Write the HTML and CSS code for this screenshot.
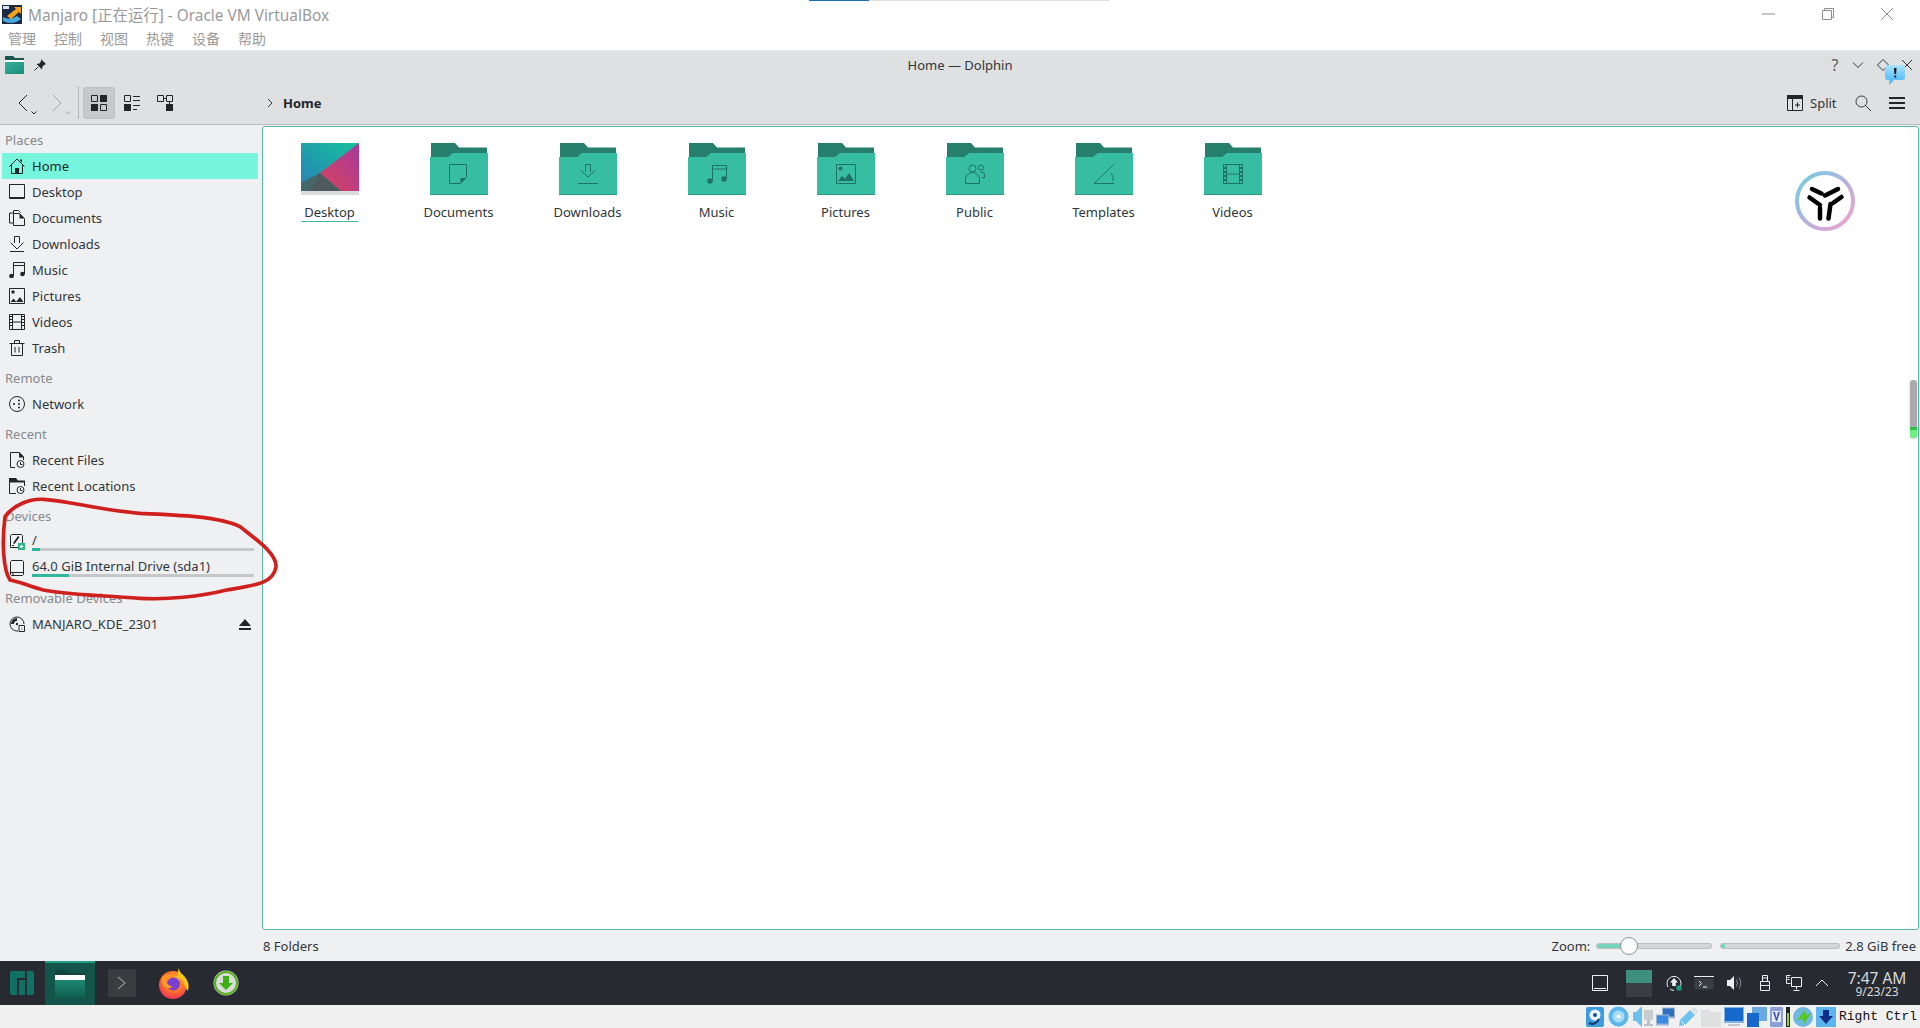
FILE: index.html
```html
<!DOCTYPE html>
<html lang="en">
<head>
<meta charset="utf-8">
<title>Manjaro - Oracle VM VirtualBox</title>
<link rel="stylesheet" href="styles.css">
</head>
<body>
<svg class="sprite" xmlns="http://www.w3.org/2000/svg">
  <defs>
    <linearGradient id="wallBg" x1="0" y1="1" x2="1" y2="0"><stop offset="0" stop-color="#2b7fb8"/><stop offset="1" stop-color="#12c39b"/></linearGradient>
    <linearGradient id="wallPink" x1="0" y1="1" x2="1" y2="0"><stop offset="0" stop-color="#d8425c"/><stop offset="1" stop-color="#a63a9c"/></linearGradient>
    <linearGradient id="ring" x1="0" y1="0" x2="1" y2="1"><stop offset="0" stop-color="#6fd0e0"/><stop offset=".5" stop-color="#b4b0e0"/><stop offset="1" stop-color="#f2a4c8"/></linearGradient>
    <linearGradient id="tb" x1="0" y1="0" x2="0" y2="1"><stop offset="0" stop-color="#1f8672"/><stop offset="1" stop-color="#0e5f52"/></linearGradient>
    <linearGradient id="tb2" x1="0" y1="0" x2="1" y2="1"><stop offset="0" stop-color="#35b39b"/><stop offset="1" stop-color="#1d8a76"/></linearGradient>
    <radialGradient id="ffx" cx=".55" cy=".35" r=".75"><stop offset="0" stop-color="#ffb52c"/><stop offset=".55" stop-color="#ff6a2a"/><stop offset="1" stop-color="#e5206f"/></radialGradient>
    <linearGradient id="bubble" x1="0" y1="0" x2="0" y2="1"><stop offset="0" stop-color="#a8e4ff"/><stop offset="1" stop-color="#3fb0f0"/></linearGradient>

    <symbol id="folder" viewBox="0 0 58 52">
      <path class="fb" d="M1 0H25L29 4.500H57V15H1z"/>
      <path class="ff" d="M0 14H18L23 10H58V52H0z"/>
      <path class="fl" d="M0 51H58V52H0z"/>
    </symbol>

    <symbol id="home" viewBox="0 0 16 16"><path class="s" d="M.5 8.500 8 1l7.500 7.500M2.500 7v8.500h11V7"/><path class="f" d="M6 10h4v5.500H6zM11 1.500h2v3l-2-2z"/></symbol>
    <symbol id="desk" viewBox="0 0 16 16"><path class="s" d="M.5.5h15v14H.5z"/><path class="f" d="M1 13h14v2H1z"/></symbol>
    <symbol id="docs" viewBox="0 0 16 16"><path class="s" d="M4.500 3.500V.5h5l2 2M4.500 3H.5v10h4"/><path class="s" d="M4.500 3.500h6l5 5v7h-11z"/><path class="f" d="M10.500 3.500l5 5h-5z"/></symbol>
    <symbol id="down" viewBox="0 0 16 16"><path class="s" d="M5.500 7V.5h5V7M1.500 6.500 8 13l6.500-6.500M1 15.500h14"/></symbol>
    <symbol id="music" viewBox="0 0 16 16"><path class="s" d="M4.500 14V.5h11V12"/><path class="s" d="M4.500 3.500h11"/><circle class="f" cx="2.500" cy="14" r="2.300"/><circle class="f" cx="13.500" cy="12" r="2.300"/></symbol>
    <symbol id="pics" viewBox="0 0 16 16"><path class="s" d="M.5.5h15v15H.5z"/><circle class="f" cx="4" cy="4" r="1.700"/><path class="f" d="M1.500 14l3-3.500 3 3.500zM7 14l4-5 3.500 5z"/></symbol>
    <symbol id="vids" viewBox="0 0 16 16"><path class="s" d="M.5.5h15v15H.5zM3.500.5v15M12.500.5v15M3.500 8h9"/><path class="f" d="M0 2h3v1H0zM0 5h3v1H0zM0 8h3v1H0zM0 11h3v1H0zM13 2h3v1h-3zM13 5h3v1h-3zM13 8h3v1h-3zM13 11h3v1h-3z"/></symbol>
    <symbol id="trash" viewBox="0 0 16 16"><path class="s" d="M2.500 3.500h11v12h-11zM.5 3.500h15M5.500 3V.5h5V3M6 7v5.500M10 7v5.500"/></symbol>
    <symbol id="net" viewBox="0 0 16 16"><circle class="s" cx="8" cy="8" r="7.500"/><circle class="f" cx="5" cy="8" r="1"/><circle class="f" cx="10" cy="4.500" r="1"/><circle class="f" cx="10" cy="8" r="1"/><circle class="f" cx="10" cy="11.500" r="1"/></symbol>
    <symbol id="rfile" viewBox="0 0 16 16"><path class="s" d="M6 15.500H1.500V.5h9l4 4V8"/><path class="f" d="M10 .5l5 5h-5z"/><circle class="w s" cx="11.500" cy="12" r="3.500"/><path class="s" d="M11.500 10v2.500h2"/></symbol>
    <symbol id="rloc" viewBox="0 0 16 16"><path class="f" d="M0 0h7l2 2.500h7v2H0z"/><path class="s" d="M.5 4v11.500H7M15.500 4v4"/><circle class="w s" cx="11.500" cy="12" r="3.500"/><path class="s" d="M11.500 10v2.500h2"/></symbol>
    <symbol id="root" viewBox="0 0 16 16"><path class="s" d="M2.500.5h10l1 1v12h-12v-12z"/><path class="f" d="M4 9l5-7 1.500 1-5 7zM3 11h2v1H3z"/><path class="gr" d="M9 9h7v7H9z"/><path class="ws" d="M14.500 12.500h-3M13 11l-1.500 1.500L13 14"/></symbol>
    <symbol id="drive" viewBox="0 0 16 16"><path class="s" d="M2.500.5h11l1 1v13l-1 1h-11l-1-1v-13z"/><path class="f" d="M1.500 12h13v1h-13zM3 13.500h2v1H3z"/></symbol>
    <symbol id="disc" viewBox="0 0 16 16"><path class="s" d="M15 8a7 7 0 1 0-7 7h1"/><path class="f" d="M8 2a6 6 0 0 0-6 6h3a3 3 0 0 1 3-3z"/><circle class="f" cx="8" cy="8" r="1.200"/><path class="w s" d="M10 9.500h5.500v6H10z"/><path class="s" d="M13 12.500v1"/></symbol>
  </defs>
</svg>

<header class="vbox-head">
  <div class="vbox-title">
    <svg class="vbox-logo" viewBox="0 0 22 22">
      <rect x="1" y="2" width="20" height="19" fill="#1c2a44"/>
      <path d="M2 14q7 4 14-1l4 3q-8 7-18 2z" fill="#4aa8e0"/>
      <path d="M6 13 15 6l-2-2h7v7l-2-2-8 7z" fill="#f5a31c"/>
      <rect x="2" y="3" width="6" height="3" fill="#dfe6ee"/>
    </svg>
    <span>Manjaro [正在运行] - Oracle VM VirtualBox</span>
  </div>
  <nav class="vbox-menu"><span>管理</span><span>控制</span><span>视图</span><span>热键</span><span>设备</span><span>帮助</span></nav>
  <div class="load-bar"><i></i></div>
  <div class="win-btns">
    <svg class="wb" viewBox="0 0 14 14"><path d="M0 7h13"/></svg>
    <svg class="wb" viewBox="0 0 14 14"><path d="M1.500 3.500h9v9h-9zM3.500 3.500v-2h9v9h-2"/></svg>
    <svg class="wb" viewBox="0 0 14 14"><path d="M1 1l12 12M13 1 1 13"/></svg>
  </div>
</header>

<div class="dolphin">
  <div class="titlebar">
    <div class="tb-left">
      <svg class="tb-folder" viewBox="0 0 19 18"><path d="M0 0h8l2 2h9v5H0z" fill="#17574c"/><rect y="4" width="19" height="2" fill="#fff"/><rect y="6" width="19" height="12" fill="url(#tb2)"/></svg>
      <svg class="tb-pin" viewBox="0 0 12 12"><path class="pin" d="M7 0l5 5-1.500.8L8.500 7.500l-.5 3-5.500-5.500 3-.5L7.200 2z"/><path class="pinl" d="M4 8 .5 11.500"/></svg>
    </div>
    <div class="tb-title">Home — Dolphin</div>
    <div class="tb-right">
      <span class="tb-q">?</span>
      <svg class="tb-btn" viewBox="0 0 12 12"><path d="M1 3.500 6 8.500l5-5"/></svg>
      <svg class="tb-btn" viewBox="0 0 12 12"><path d="M6 .5 11.500 6 6 11.500.5 6z"/></svg>
      <svg class="tb-btn" viewBox="0 0 12 12"><path d="M1 1l10 10M11 1 1 11"/></svg>
      <svg class="bubble" viewBox="0 0 20 20"><path d="M3 0h14a3 3 0 0 1 3 3v9a3 3 0 0 1-3 3H9l-5 5 .5-5H3a3 3 0 0 1-3-3V3a3 3 0 0 1 3-3z" fill="url(#bubble)"/><path d="M9 3h2.500l-.4 6H9.400zM9.300 10.500h1.900v2H9.300z" fill="#111"/></svg>
    </div>
  </div>

  <div class="toolbar">
    <div class="tool-left">
      <span class="nav"><svg class="nav-arrow" viewBox="0 0 10 18"><path d="M9 1 1 9l8 8"/></svg><svg class="nav-caret" viewBox="0 0 6 4"><path d="M.5.5 3 3 5.500.5"/></svg></span>
      <span class="nav nav-off"><svg class="nav-arrow" viewBox="0 0 10 18"><path d="M1 1l8 8-8 8"/></svg><svg class="nav-caret" viewBox="0 0 6 4"><path d="M.5.5 3 3 5.500.5"/></svg></span>
      <span class="tool-sep"></span>
      <span class="view view-on"><svg class="view-ic" viewBox="0 0 16 16"><path class="s" d="M.5.5h6v6h-6zM9.500 9.500h6v6h-6z"/><path class="f" d="M9 0h7v7H9zM0 9h7v7H0z"/></svg></span>
      <span class="view"><svg class="view-ic" viewBox="0 0 16 16"><path class="s" d="M.5.500h6v6h-6zM9 1.500h7M9 5.500h7M9 10.500h7M9 14.500h4"/><path class="f" d="M0 9h7v7H0z"/></svg></span>
      <span class="view"><svg class="view-ic" viewBox="0 0 16 16"><path class="s" d="M.5.5h6v6h-6zM9.500.5h6v6h-6zM6.500 3.500h3M12.500 6.500v3"/><path class="f" d="M9 9h7v7H9z"/></svg></span>
    </div>
    <div class="crumb">
      <svg class="crumb-ic" viewBox="0 0 6 10"><path d="M1 1l4 4-4 4"/></svg>
      <b>Home</b>
    </div>
    <div class="tool-right">
      <svg class="split-ic" viewBox="0 0 16 16"><path class="f" d="M0 0h16v4H0z"/><path class="s" d="M.5 4v11.500h15V4M5.500 4v11.500M8 10h5M10.500 7.500v5"/></svg>
      <span class="split-txt">Split</span>
      <svg class="search-ic" viewBox="0 0 16 16"><circle class="s" cx="6.500" cy="6.500" r="5.500"/><path class="s" d="M10.500 10.500 16 16"/></svg>
      <svg class="menu-ic" viewBox="0 0 16 14"><path class="f" d="M0 1h16v2H0zM0 6h16v2H0zM0 11h16v2H0z"/></svg>
    </div>
  </div>

  <main class="main">
    <aside class="sidebar">
      <div class="sec sec-first">Places</div>
      <div class="row row-on"><svg class="ic"><use href="#home"/></svg>Home</div>
      <div class="row"><svg class="ic"><use href="#desk"/></svg>Desktop</div>
      <div class="row"><svg class="ic"><use href="#docs"/></svg>Documents</div>
      <div class="row"><svg class="ic"><use href="#down"/></svg>Downloads</div>
      <div class="row"><svg class="ic"><use href="#music"/></svg>Music</div>
      <div class="row"><svg class="ic"><use href="#pics"/></svg>Pictures</div>
      <div class="row"><svg class="ic"><use href="#vids"/></svg>Videos</div>
      <div class="row"><svg class="ic"><use href="#trash"/></svg>Trash</div>
      <div class="sec">Remote</div>
      <div class="row"><svg class="ic"><use href="#net"/></svg>Network</div>
      <div class="sec">Recent</div>
      <div class="row"><svg class="ic"><use href="#rfile"/></svg>Recent Files</div>
      <div class="row"><svg class="ic"><use href="#rloc"/></svg>Recent Locations</div>
      <div class="sec">Devices</div>
      <div class="row row-dev"><svg class="ic"><use href="#root"/></svg><div class="dev"><span>/</span><div class="cap"><i class="cap-root"></i></div></div></div>
      <div class="row row-dev"><svg class="ic"><use href="#drive"/></svg><div class="dev"><span>64.0 GiB Internal Drive (sda1)</span><div class="cap"><i class="cap-sda"></i></div></div></div>
      <div class="sec">Removable Devices</div>
      <div class="row row-eject"><svg class="ic"><use href="#disc"/></svg>MANJARO_KDE_2301<svg class="eject" viewBox="0 0 12 11"><path d="M6 0l6 7H0zM0 9h12v2H0z"/></svg></div>
    </aside>

    <section class="content">
      <div class="pane">
        <div class="grid">
          <div class="cell">
            <svg class="thumb" viewBox="0 0 58 52"><rect width="58" height="48" fill="url(#wallBg)"/><path d="M58 0V48H40L19 30z" fill="url(#wallPink)"/><path d="M0 48V40L19 30 40 48z" fill="#4d5b5d"/><path d="M0 48V41L7 36 19 30 9 48z" fill="#3f6f76" opacity=".6"/><rect y="48" width="58" height="4" fill="#d9dcdc"/></svg>
            <span class="lbl lbl-on">Desktop</span>
          </div>
          <div class="cell"><div class="fold"><svg class="fold-bg"><use href="#folder"/></svg><svg class="gl" viewBox="0 0 20 20"><path d="M.5.5h17v13l-6 6H.5z"/><path class="gl-f" d="M17 14l-5.500 5.500V14z"/></svg></div><span class="lbl">Documents</span></div>
          <div class="cell"><div class="fold"><svg class="fold-bg"><use href="#folder"/></svg><svg class="gl" viewBox="0 0 20 20"><path d="M7.500 8V.5h5V8M3 6.500 10 13l7-6.500M0 19.500h20"/></svg></div><span class="lbl">Downloads</span></div>
          <div class="cell"><div class="fold"><svg class="fold-bg"><use href="#folder"/></svg><svg class="gl" viewBox="0 0 20 20"><path d="M5.500 17V1.500h14V15M5.500 5h14"/><circle class="gl-f" cx="3" cy="17" r="2.700"/><circle class="gl-f" cx="17" cy="15" r="2.700"/></svg></div><span class="lbl">Music</span></div>
          <div class="cell"><div class="fold"><svg class="fold-bg"><use href="#folder"/></svg><svg class="gl" viewBox="0 0 20 20"><path d="M.5.5h19v19H.5z"/><circle class="gl-f" cx="4.500" cy="4.500" r="2"/><path class="gl-f" d="M2 17l4-5 3 3 4-6 5 8z"/></svg></div><span class="lbl">Pictures</span></div>
          <div class="cell"><div class="fold"><svg class="fold-bg"><use href="#folder"/></svg><svg class="gl" viewBox="0 0 20 20"><circle cx="7.500" cy="4.500" r="3.500"/><circle cx="16" cy="3.500" r="2.500"/><path d="M.5 19.500v-4a7 7 0 0 1 14 0v4zM15 8h1.500a3 3 0 0 1 3 3v2.500H17"/></svg></div><span class="lbl">Public</span></div>
          <div class="cell"><div class="fold"><svg class="fold-bg"><use href="#folder"/></svg><svg class="gl" viewBox="0 0 20 20"><path d="M0 19.500 19.500.5M0 19.500h20M17 9q3 4 2 8"/></svg></div><span class="lbl">Templates</span></div>
          <div class="cell"><div class="fold"><svg class="fold-bg"><use href="#folder"/></svg><svg class="gl" viewBox="0 0 20 20"><path d="M.5.5h19v19H.5zM3.500.5v19M16.500.5v19M3.500 10h13"/><path class="gl-f" d="M0 3h3v2H0zM0 7h3v2H0zM0 11h3v2H0zM0 15h3v2H0zM17 3h3v2h-3zM17 7h3v2h-3zM17 11h3v2h-3zM17 15h3v2h-3z"/></svg></div><span class="lbl">Videos</span></div>
        </div>
      </div>
      <footer class="status">
        <span class="st-left">8 Folders</span>
        <span class="st-zoom">Zoom:</span>
        <div class="zoom-track"><i></i><b></b></div>
        <div class="free-track"><i></i></div>
        <span class="st-free">2.8 GiB free</span>
      </footer>
    </section>
  </main>
</div>

<div class="panel">
  <svg class="p-man" viewBox="0 0 24 24"><path d="M0 2a2 2 0 0 1 2-2h13v7H7v17H2a2 2 0 0 1-2-2zM9 9h6v15H9zM17 0h5a2 2 0 0 1 2 2v20a2 2 0 0 1-2 2h-5z" fill="#0e7163"/></svg>
  <div class="p-active">
    <svg class="p-folder" viewBox="0 0 30 28"><path d="M0 0h11l3 3h16v7H0z" fill="#11453d"/><rect y="5" width="30" height="5" fill="#fff"/><rect y="10" width="30" height="18" fill="url(#tb)"/></svg>
  </div>
  <div class="p-term"><svg class="p-term-c" viewBox="0 0 10 14"><path d="M1 1l7 6-7 6"/></svg></div>
  <svg class="p-fox" viewBox="0 0 32 32">
    <circle cx="15" cy="18" r="14" fill="url(#ffx)"/>
    <path d="M20 1q2 5 7 9 5 6 3 14-3-3-5-10-3-3-7-4 3-4 2-9z" fill="#ffc21f"/>
    <circle cx="15.500" cy="17" r="6.500" fill="#7a3fd0"/>
    <path d="M4 10q5-3 10-2-3 3-7 3 1 7 8 9-8 3-11-3z" fill="#ff9a26"/>
  </svg>
  <svg class="p-dl" viewBox="0 0 26 26"><circle cx="13" cy="13" r="12.500" fill="#d8dbd8"/><circle cx="13" cy="13" r="11" fill="none" stroke="#58b020" stroke-width="2"/><path d="M10 6h6v7h4l-7 7-7-7h4z" fill="#3dae14"/></svg>
  <div class="tray">
    <svg class="t-desk" viewBox="0 0 16 16"><path class="t-s" d="M.5.5h15v15H.5zM2 13.500h12"/></svg>
    <div class="t-pager"><i></i><b></b></div>
    <svg class="t-upd" viewBox="0 0 16 16"><path class="t-s" d="M2 12a7 7 0 1 1 12 0M4 14a7 7 0 0 0 4 1.500"/><path class="t-f" d="M8 3l4 4.500H9.800V11H6.200V7.500H4z"/><circle cx="13" cy="13" r="2.800" fill="#1a9a7c"/></svg>
    <svg class="t-con" viewBox="0 0 20 14"><path class="t-s" d="M0 .5h20"/><rect x=".5" y="2.500" width="19" height="11" fill="#3a3e45"/><path class="t-s" d="M5 5l2.500 2.500L5 10M9 11h4"/></svg>
    <svg class="t-vol" viewBox="0 0 16 16"><path class="t-f" d="M1 5h3l4-4v14l-4-4H1z"/><path class="t-s t-dim" d="M10.500 4.500q2 3.500 0 7M13 2.500q3.500 5.500 0 11"/></svg>
    <svg class="t-usb" viewBox="0 0 10 16"><path class="t-s" d="M2.500.5h5v6h-5zM.5 6.500h9v9h-9zM.5 10.500h9"/><path class="t-f" d="M3.500 2h1v2h-1zM5.500 2h1v2h-1z"/></svg>
    <svg class="t-net" viewBox="0 0 16 16"><path class="t-s" d="M4.500 .5h-4v8h4M5.500 2.500h10v9h-10zM10.500 11.500v3M7.500 15.500h6M1.500 2.500h2M1.500 4.500h2"/></svg>
    <svg class="t-car" viewBox="0 0 14 8"><path class="t-s" d="M1 7l6-6 6 6"/></svg>
    <div class="clock"><span class="c-t">7:47 AM</span><span class="c-d">9/23/23</span></div>
  </div>
</div>

<div class="vbox-status">
  <svg class="vs vs-18" viewBox="0 0 18 20"><rect width="18" height="20" rx="2" fill="#3d9be0"/><circle cx="9" cy="8" r="5.500" fill="#eaf5fd"/><circle cx="9" cy="8" r="2" fill="#1d4f88"/><path d="M3 16q6 3 10-4" fill="none" stroke="#123b6b" stroke-width="2"/></svg>
  <svg class="vs vs-21" viewBox="0 0 21 21"><circle cx="10.500" cy="10.500" r="10" fill="#5bb8ee"/><circle cx="10.500" cy="10.500" r="6" fill="#a9dcf7"/><circle cx="10.500" cy="10.500" r="2" fill="#fff"/></svg>
  <svg class="vs vs-22" viewBox="0 0 22 21"><path d="M0 6h3l6-6v21l-6-6H0z" fill="#6cc0ee"/><path d="M11 4h9v10h-9z" fill="#c9cccf"/><path d="M14 14h3v4h3v2h-9v-2h3z" fill="#bfc2c5"/></svg>
  <svg class="vs vs-19" viewBox="0 0 19 19"><rect x="6" y="0" width="13" height="11" fill="#9fb7d4"/><rect x="7" y="1" width="11" height="8" fill="#2f6fc0"/><rect y="7" width="13" height="11" fill="#9fb7d4"/><rect x="1" y="8" width="11" height="8" fill="#3a8ae0"/></svg>
  <svg class="vs vs-20" viewBox="0 0 20 20"><path d="M1 19l1-6L12 3l5 5L7 18z" fill="#6fc2f0"/><path d="M13 2l3-2 4 4-2 3z" fill="#d9dee3"/><path d="M3 14l4 4" stroke="#fff"/></svg>
  <svg class="vs vs-20" viewBox="0 0 20 20"><path d="M0 3h8l2 2h10v15H0z" fill="#dfe0e0"/></svg>
  <svg class="vs vs-20" viewBox="0 0 20 20"><rect width="20" height="16" fill="#7fb3e3"/><rect x="1" y="1" width="18" height="13" fill="#1668cc"/><rect x="4" y="17" width="12" height="2" fill="#c2c6ca"/></svg>
  <svg class="vs vs-20" viewBox="0 0 20 20"><rect x="5" width="15" height="14" fill="#6aa8e0"/><rect y="6" width="12" height="14" fill="#1668cc"/></svg>
  <svg class="vs vs-13" viewBox="0 0 13 20"><path d="M1 0h11l1 1v18l-1 1H1l-1-1V1z" fill="#8b9fd8"/><rect x="2" y="4" width="9" height="11" fill="#e7ebf8"/><path d="M3 5h2l1.500 6L8 5h2l-3 9H6z" fill="#3b55b5"/></svg>
  <span class="vs-meter"></span>
  <svg class="vs vs-20" viewBox="0 0 20 20"><circle cx="10" cy="10" r="10" fill="#6fb8e2"/><path d="M4 13 12 3l1 5 5-2-7 11-1-5z" fill="#56c81e"/></svg>
  <svg class="vs vs-20" viewBox="0 0 20 20"><rect width="20" height="20" fill="#5cb4ec"/><path d="M7 3h6v6h4l-7 8-7-8h4z" fill="#0f2f86"/></svg>
  <span class="vs-key">Right Ctrl</span>
</div>

<svg class="red-mark" viewBox="0 0 900 720"><path d="M30 510C10 480 5 400 15 320 40 285 90 265 130 268 220 275 300 300 420 310 540 315 660 320 720 350 770 390 830 430 828 470 820 520 770 525 680 540 600 560 500 570 420 565 300 555 200 555 130 540 90 530 60 515 30 510Z"/></svg>

<svg class="brand" viewBox="0 0 60 60">
  <circle class="brand-ring" cx="30" cy="30" r="28"/>
  <g class="brand-y"><path d="M17 18l9.500 4.500M30 24.500l13-6.500M14.500 26.500 25 34M38 32l8.500-6M25 37v10.500M35.500 33 33.500 47.500"/></g>
</svg>
<div class="scroll-ind"><i></i></div>
</body>
</html>
```

FILE: styles.css
```css
* { box-sizing: border-box; }
html, body { margin: 0; padding: 0; }
body {
  width: 1920px;
  height: 1028px;
  overflow: hidden;
  position: relative;
  display: flex;
  flex-direction: column;
  background: #fff;
  color: #31363b;
  font-family: "Noto Sans", "Noto Sans CJK SC", sans-serif;
  font-size: 13px;
}
.sprite { position: absolute; width: 0; height: 0; }

/* symbol parts */
.s { fill: none; stroke: currentColor; stroke-width: 1; }
.f { fill: currentColor; stroke: none; }
.w { fill: #eff0f1; }
.gr { fill: #2fb585; }
.ws { fill: none; stroke: #fff; stroke-width: 1.2; }
.fb { fill: #267f6d; }
.ff { fill: #37bda2; }
.fl { fill: #2a9a84; }

/* VirtualBox head */
.vbox-head { height: 50px; flex: none; position: relative; background: #fff; }
.vbox-title { height: 26px; display: flex; align-items: center; color: #9a9a9a; font-size: 15.4px; padding-top: 2px; }
.vbox-logo { width: 22px; height: 22px; flex: none; margin: 0 5px 0 1px; }
.vbox-menu { height: 24px; display: flex; gap: 18px; align-items: center; padding-left: 8px; color: #9a9a9a; font-size: 14px; }
.load-bar { position: absolute; left: 809px; top: 0; width: 301px; height: 1px; background: #dfe0e2; }
.load-bar i { display: block; width: 60px; height: 1px; background: #1a6fb5; }
.win-btns { position: absolute; right: 26px; top: 7px; display: flex; gap: 45px; }
.wb { width: 14px; height: 14px; fill: none; stroke: #8e8e8e; stroke-width: 1; }

/* Dolphin */
.dolphin { height: 911px; flex: none; display: flex; flex-direction: column; background: #eff0f1; }
.titlebar { height: 32px; flex: none; background: #dee0e2; display: flex; align-items: center; position: relative; border-top: 1px solid #e6e7e9; padding-bottom: 4px; }
.tb-left { display: flex; align-items: center; width: 660px; padding-left: 5px; gap: 10px; }
.tb-folder { width: 19px; height: 18px; }
.tb-pin { width: 12px; height: 12px; }
.pin { fill: #232629; }
.pinl { fill: none; stroke: #232629; }
.tb-title { width: 600px; text-align: center; font-size: 13px; color: #31363b; }
.tb-right { flex: 1; display: flex; align-items: center; justify-content: flex-end; gap: 12.500px; padding-right: 7px; position: relative; }
.tb-q { font-size: 16px; color: #5a5e62; line-height: 20px; margin-right: 1px; }
.tb-btn { width: 12px; height: 12px; fill: none; stroke: #31363b; stroke-width: 1; }
.bubble { position: absolute; right: 15px; top: 10px; width: 20px; height: 20px; }

.toolbar { height: 43px; flex: none; background: #dee0e2; border-bottom: 1px solid #b7b9bc; padding-bottom: 1px; display: flex; align-items: center; }
.tool-left { width: 262px; flex: none; display: flex; align-items: center; padding-left: 18px; height: 100%; color: #232629; }
.nav { display: flex; align-items: flex-end; width: 34px; height: 24px; }
.nav-arrow { width: 10px; height: 18px; fill: none; stroke: #232629; stroke-width: 1; margin-bottom: 3px; }
.nav-caret { width: 6px; height: 4px; fill: none; stroke: #232629; margin-left: 3px; margin-bottom: 0; }
.nav-off { opacity: .3; width: 26px; }
.tool-sep { width: 1px; height: 33px; background: #b5b7ba; margin-left: 0; margin-right: 4px; }
.view { width: 32px; height: 32px; margin-right: 1px; display: flex; align-items: center; justify-content: center; border-radius: 3px; }
.view-on { background: #c6c9cc; border: 1px solid #bfc2c5; }
.view-ic { width: 16px; height: 16px; }
.crumb { display: flex; align-items: center; gap: 10px; padding-left: 5px; color: #232629; }
.crumb b { font-weight: 700; font-size: 13px; }
.crumb-ic { width: 6px; height: 10px; fill: none; stroke: #31363b; }
.tool-right { margin-left: auto; display: flex; align-items: center; padding-right: 15px; color: #232629; }
.split-ic { width: 16px; height: 16px; margin-right: 7px; }
.split-txt { width: 26px; margin-right: 19px; font-size: 13px; color: #31363b; }
.search-ic { width: 16px; height: 16px; margin-right: 18px; color: #31363b; }
.menu-ic { width: 16px; height: 14px; }

.main { flex: 1; display: flex; min-height: 0; }
.sidebar { width: 262px; flex: none; padding: 2px 0 0 2px; background: #eff0f1; color: #31363b; }
.sec { height: 30px; padding: 8px 0 0 3px; line-height: 18px; color: #85898d; font-size: 13px; }
.sec-first { height: 26px; padding-top: 4px; }
.row { height: 26px; width: 256px; display: flex; align-items: center; padding-left: 7px; gap: 7px; font-size: 13px; color: #31363b; }
.row-on { background: #77f5dd; color: #1f2a2c; }
.ic { width: 16px; height: 16px; flex: none; color: #232629; }
.row-dev { align-items: flex-start; padding-top: 4px; }
.row-dev .ic { margin-top: 1px; }
.dev { flex: 1; padding-right: 4px; position: relative; }
.dev span { display: block; line-height: 14px; height: 14px; }
.cap { height: 3px; background: #c6c7c8; margin-top: 1px; }
.cap i { display: block; height: 3px; background: #2fb79b; }
.cap-root { width: 8px; }
.cap-sda { width: 37px; }
.eject { width: 12px; height: 11px; margin-left: auto; margin-right: 7px; fill: #232629; }

.content { flex: 1; display: flex; flex-direction: column; min-width: 0; }
.pane { height: 804px; margin-top: 1px; margin-right: 1px; background: #fff; border: 1px solid #58b8a6; border-radius: 3px; }
.grid { display: flex; padding: 16px 0 0 2px; }
.cell { width: 129px; display: flex; flex-direction: column; align-items: center; }
.thumb { width: 58px; height: 52px; display: block; }
.fold { width: 58px; height: 52px; position: relative; }
.fold-bg { width: 58px; height: 52px; display: block; }
.gl { position: absolute; left: 19px; top: 21px; width: 20px; height: 20px; fill: none; stroke: #1e7263; stroke-width: 1; }
.gl-f { fill: #1e7263; stroke: none; }
.lbl { margin-top: 8px; line-height: 18px; height: 19px; font-size: 13px; color: #31363b; }
.lbl-on { border-bottom: 1px solid #3fb9a2; padding: 0 3px; }

.status { flex: 1; display: flex; align-items: center; padding: 0 4px 0 1px; font-size: 13px; color: #31363b; }
.st-left { margin-right: auto; }
.st-zoom { margin-right: 6px; }
.zoom-track { width: 116px; height: 6px; border-radius: 3px; background: #d3d5d7; border: 1px solid #bcbec0; position: relative; margin-right: 8px; }
.zoom-track i { display: block; width: 33px; height: 4px; border-radius: 2px 0 0 2px; background: #77d3bd; }
.zoom-track b { position: absolute; left: 23px; top: -7px; width: 18px; height: 18px; border-radius: 50%; background: #fcfcfc; border: 1px solid #8f9294; }
.free-track { width: 120px; height: 6px; border-radius: 3px; background: #d3d5d7; border: 1px solid #bcbec0; margin-right: 5px; }
.free-track i { display: block; width: 4px; height: 4px; border-radius: 2px 0 0 2px; background: #77d3bd; }

/* panel */
.panel { height: 44px; flex: none; background: #272a31; display: flex; align-items: center; color: #eff0f1; }
.p-man { width: 24px; height: 24px; margin-left: 10px; flex: none; }
.p-active { width: 50px; height: 44px; margin-left: 11px; background: #13544b; border-top: 2px solid #1e9f87; display: flex; align-items: center; justify-content: center; flex: none; }
.p-folder { width: 30px; height: 28px; }
.p-term { width: 28px; height: 28px; margin-left: 13px; background: #3a3c3f; display: flex; align-items: center; justify-content: center; flex: none; }
.p-term-c { width: 10px; height: 14px; fill: none; stroke: #8b8d90; stroke-width: 1.300; }
.p-fox { width: 32px; height: 32px; margin-left: 22px; flex: none; }
.p-dl { width: 26px; height: 26px; margin-left: 23px; flex: none; }
.tray { margin-left: auto; display: flex; align-items: center; height: 100%; }
.t-s { fill: none; stroke: #eff0f1; stroke-width: 1; }
.t-f { fill: #eff0f1; }
.t-dim { opacity: .5; }
.t-desk { width: 16px; height: 16px; margin-right: 18px; }
.t-pager { width: 26px; height: 27px; display: flex; flex-direction: column; margin-right: 14px; }
.t-pager i { height: 13px; background: #3f8f80; }
.t-pager b { flex: 1; background: #3a3d42; }
.t-upd { width: 16px; height: 16px; margin-right: 12px; }
.t-con { width: 20px; height: 14px; margin-right: 12px; }
.t-vol { width: 16px; height: 16px; margin-right: 18px; }
.t-usb { width: 10px; height: 16px; margin-right: 16px; }
.t-net { width: 16px; height: 16px; margin-right: 13px; }
.t-car { width: 14px; height: 8px; margin-right: 17px; }
.clock { width: 62px; margin-right: 12px; display: flex; flex-direction: column; align-items: center; line-height: 1; color: #d8dadc; }
.c-t { font-size: 15.500px; line-height: 16px; white-space: nowrap; }
.c-d { font-size: 12px; line-height: 11px; white-space: nowrap; }

/* vbox status */
.vbox-status { flex: 1; background: #f0f0f0; display: flex; align-items: center; padding-left: 1586px; }
.vs { height: 20px; flex: none; margin-right: 3px; }
.vs-18 { width: 18px; margin-right: 4px; }
.vs-21 { width: 21px; height: 21px; margin-right: 4px; }
.vs-22 { width: 22px; height: 21px; margin-right: 1px; }
.vs-19 { width: 19px; margin-right: 3px; }
.vs-20 { width: 20px; }
.vs-13 { width: 13px; margin-right: 3px; }
.vs-meter { width: 4px; height: 20px; background: linear-gradient(#222 0 30%, #8fd63a 30%); border: 1px solid #222; margin-right: 3px; flex: none; }
.vs-key { font-family: "Liberation Mono", monospace; font-size: 13px; color: #111; white-space: nowrap; }

/* overlays */
.red-mark { position: absolute; left: 0; top: 410px; width: 300px; height: 240px; fill: none; stroke: #d0201e; stroke-width: 11; }
.brand { position: absolute; left: 1795px; top: 171px; width: 60px; height: 60px; }
.brand-ring { fill: none; stroke: url(#ring); stroke-width: 4; }
.brand-y path { fill: none; stroke: #000; stroke-width: 4.500; stroke-linecap: round; }
.scroll-ind { position: absolute; left: 1910px; top: 380px; width: 7px; height: 58px; border-radius: 3px; background: #aaa; overflow: hidden; box-shadow: 0 1px 3px rgba(0,0,0,.2); }
.scroll-ind i { display: block; margin-top: 47px; height: 11px; background: linear-gradient(#2fc04f 0 25%, #6ff07e 25%); }
```
